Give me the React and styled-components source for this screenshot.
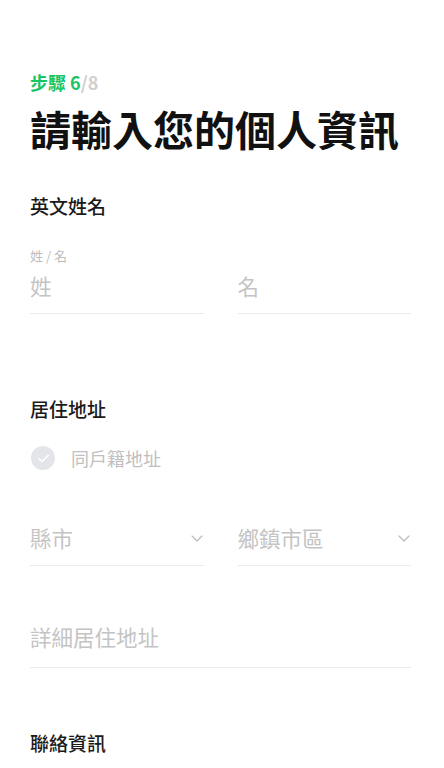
import React from 'react'
import styled, { createGlobalStyle } from 'styled-components'

const GlobalStyle = createGlobalStyle`
  html, body {
    margin: 0;
    padding: 0;
    background: #fff;
  }
  body {
    font-family: "Noto Sans CJK TC", "Noto Sans", sans-serif;
    color: #111;
  }
`

const Page = styled.div`
  width: 444px;
  height: 768px;
  overflow: hidden;
  box-sizing: border-box;
  padding: 70px 33px 0 30px;
`

const Step = styled.div`
  font-size: 18px;
  line-height: 24px;
  font-weight: 700;
  color: #19c463;
`

const StepTotal = styled.span`
  color: #cfcfcf;
`

const Title = styled.h1`
  margin: 10px 0 0;
  font-size: 41px;
  line-height: 49px;
  font-weight: 700;
  color: #111;
`

const SectionLabel = styled.h2`
  margin: ${p => p.$top}px 0 0;
  font-size: 19px;
  line-height: 26px;
  font-weight: 500;
  color: #1a1a1a;
`

const SmallLabel = styled.div`
  margin-top: 28px;
  font-size: 13px;
  line-height: 18px;
  color: #bdbdbd;
`

const Row = styled.div`
  display: grid;
  grid-template-columns: 1fr 1fr;
  column-gap: 34px;
  margin-top: ${p => p.$top}px;
`

const Field = styled.div`
  display: flex;
  align-items: center;
  justify-content: space-between;
  padding-bottom: ${p => p.$pb || 12}px;
  border-bottom: 1px solid #ebebeb;
  margin-top: ${p => p.$top || 0}px;
`

const Placeholder = styled.span`
  font-size: 21.5px;
  line-height: 30px;
  color: #c4c4c4;
`

const Chevron = styled.svg`
  width: 12px;
  height: 7px;
  margin-right: 1px;
  flex-shrink: 0;
`

const CheckRow = styled.label`
  display: flex;
  align-items: center;
  gap: 16px;
  margin-top: 23px;
  height: 26px;
`

const CheckCircle = styled.span`
  width: 24px;
  height: 24px;
  border-radius: 50%;
  background: #e3e5e9;
  display: flex;
  align-items: center;
  justify-content: center;
  margin-left: 1px;
`

const CheckText = styled.span`
  font-size: 18px;
  line-height: 26px;
  color: #c0c0c0;
`

const ChevronDown = () => (
  <Chevron viewBox="0 0 12 7" fill="none">
    <path d="M1 1l5 5 5-5" stroke="#b8b8b8" strokeWidth="1.1" strokeLinecap="round" strokeLinejoin="round" />
  </Chevron>
)

const App = () => (
  <>
    <GlobalStyle />
    <Page>
      <Step>
        步驟 6<StepTotal>/8</StepTotal>
      </Step>
      <Title>請輸入您的個人資訊</Title>

      <SectionLabel $top={40}>英文姓名</SectionLabel>
      <SmallLabel>姓 / 名</SmallLabel>
      <Row $top={6}>
        <Field>
          <Placeholder>姓</Placeholder>
        </Field>
        <Field>
          <Placeholder>名</Placeholder>
        </Field>
      </Row>

      <SectionLabel $top={82}>居住地址</SectionLabel>
      <CheckRow>
        <CheckCircle>
          <svg width="11" height="9" viewBox="0 0 11 9" fill="none">
            <path d="M1 4.5l3 3L10 1.5" stroke="#fff" strokeWidth="1.5" strokeLinecap="round" strokeLinejoin="round" />
          </svg>
        </CheckCircle>
        <CheckText>同戶籍地址</CheckText>
      </CheckRow>

      <Row $top={52}>
        <Field>
          <Placeholder>縣市</Placeholder>
          <ChevronDown />
        </Field>
        <Field>
          <Placeholder>鄉鎮市區</Placeholder>
          <ChevronDown />
        </Field>
      </Row>

      <Field $top={56} $pb={15}>
        <Placeholder>詳細居住地址</Placeholder>
      </Field>

      <SectionLabel $top={62}>聯絡資訊</SectionLabel>
    </Page>
  </>
)

export default App
